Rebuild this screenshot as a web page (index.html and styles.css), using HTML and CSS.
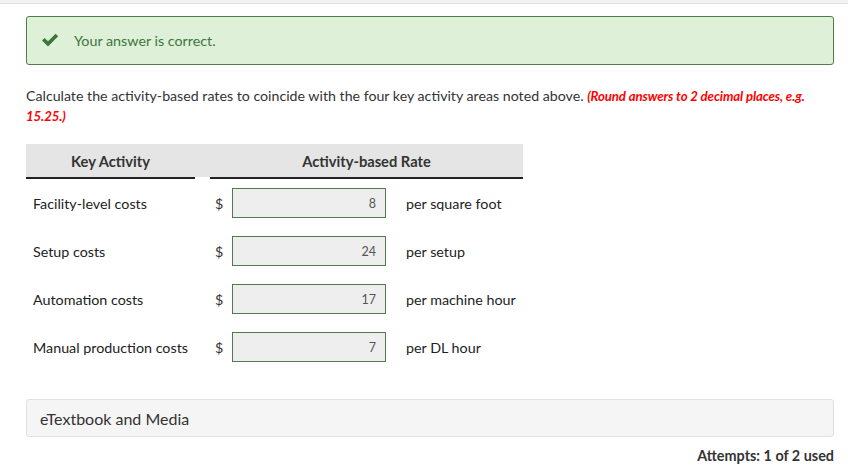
FILE: index.html
```html
<!DOCTYPE html>
<html>
<head>
<meta charset="utf-8">
<link rel="stylesheet" href="styles.css">
</head>
<body>
<div class="topbar"></div>
<main class="content">
  <div class="alert">
    <svg class="check" width="18" height="14" viewBox="0 0 18 14"><path d="M1 7.5 L3.6 5 L7 8.3 L14.6 0.8 L17.2 3.3 L7 13.4 Z" fill="#3c763d"/></svg>
    <span>Your answer is correct.</span>
  </div>
  <p class="question">Calculate the activity-based rates to coincide with the four key activity areas noted above. <em class="hint">(Round answers to 2 decimal places, e.g. 15.25.)</em></p>
  <div class="grid">
    <div class="th">Key Activity</div>
    <div class="spacer"></div>
    <div class="th">Activity-based Rate</div>

    <div class="label">Facility-level costs</div>
    <div></div>
    <div class="rate"><span class="dollar">$</span><div class="input">8</div><span class="unit">per square foot</span></div>

    <div class="label">Setup costs</div>
    <div></div>
    <div class="rate"><span class="dollar">$</span><div class="input">24</div><span class="unit">per setup</span></div>

    <div class="label">Automation costs</div>
    <div></div>
    <div class="rate"><span class="dollar">$</span><div class="input">17</div><span class="unit">per machine hour</span></div>

    <div class="label">Manual production costs</div>
    <div></div>
    <div class="rate"><span class="dollar">$</span><div class="input">7</div><span class="unit">per DL hour</span></div>
  </div>
  <div class="media">eTextbook and Media</div>
  <div class="attempts">Attempts: 1 of 2 used</div>
</main>
</body>
</html>
```
FILE: styles.css
```css
* { box-sizing: border-box; }
body {
  margin: 0;
  font-family: Lato, "Open Sans", Arial, sans-serif;
  color: #333;
  background: #fff;
}
.topbar {
  height: 4px;
  background: #f2f2f2;
  border-bottom: 1px solid #e2e2e2;
}
.content {
  padding: 12px 14px 0 26px;
}
.alert {
  display: flex;
  align-items: center;
  height: 49px;
  background: #dff0d8;
  border: 1px solid #4e7d4a;
  border-radius: 3px;
  padding-left: 14px;
  font-size: 14.3px;
  color: #3c763d;
}
.check { margin-right: 15px; margin-top: -2px; }
.question {
  margin: 21px 0 0 0;
  font-size: 14.2px;
  line-height: 20px;
  color: #333;
}
.hint {
  color: #ff0000;
  font-weight: bold;
  font-size: 13.2px;
  line-height: 18px;
  letter-spacing: -0.1px;
}
.grid {
  display: grid;
  grid-template-columns: 169px 15px 313px;
  grid-template-rows: 35px repeat(4, 48px);
  margin-top: 18px;
}
.grid .th {
  background: #e5e5e5;
  border-bottom: 2px solid #222;
  font-weight: bold;
  font-size: 14.7px;
  color: #333;
  display: flex;
  align-items: center;
  justify-content: center;
  padding-top: 1px;
}
.grid .spacer {
  height: 33px;
  background: #e5e5e5;
}
.label {
  display: flex;
  align-items: center;
  padding-left: 7px;
  font-size: 14.3px;
  color: #222;
}
.rate {
  display: flex;
  align-items: center;
  white-space: nowrap;
  font-size: 14.3px;
}
.dollar {
  width: 22px;
  padding-left: 5px;
  color: #333;
}
.input {
  width: 154px;
  height: 30px;
  border: 1px solid #4e7d4a;
  background: #eeeeee;
  color: #555;
  font-size: 12.5px;
  display: flex;
  align-items: center;
  justify-content: flex-end;
  padding-right: 9px;
  padding-top: 1px;
}
.unit {
  margin-left: 20px;
  color: #222;
}
.media {
  margin-top: 28px;
  height: 38px;
  background: #f5f5f5;
  border: 1px solid #e0e0e0;
  border-radius: 3px;
  display: flex;
  align-items: center;
  padding-left: 13px;
  font-size: 16px;
  color: #333;
}
.attempts {
  text-align: right;
  font-weight: bold;
  font-size: 14.4px;
  color: #333;
  margin-top: 10px;
}
```
